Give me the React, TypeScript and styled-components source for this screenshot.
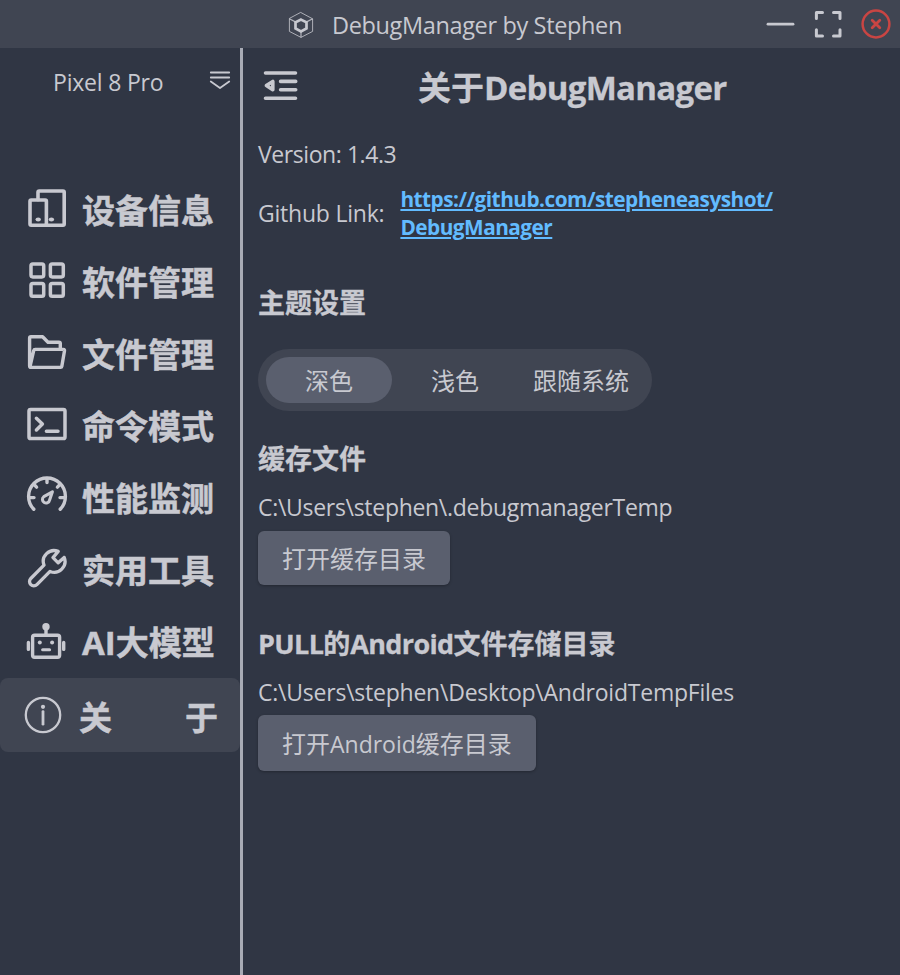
import React from "react";
import styled, { createGlobalStyle } from "styled-components";

const color = {
  bg: "#303644",
  raised: "#404552",
  control: "#5a5f6e",
  text: "#c8c9d0",
  divider: "#a8abb5",
  link: "#62bbff",
  danger: "#c94543",
};

const GlobalStyle = createGlobalStyle`
  *, *::before, *::after { box-sizing: border-box; }
  body {
    margin: 0;
    background: ${color.bg};
    color: ${color.text};
    font-family: "Open Sans", "Noto Sans CJK SC", sans-serif;
  }
`;

const Window = styled.div`
  display: flex;
  flex-direction: column;
  width: 900px;
  height: 975px;
  overflow: hidden;
  background: ${color.bg};
`;

const TitleBar = styled.header`
  display: flex;
  align-items: center;
  flex: none;
  height: 48px;
  padding: 0 8px 0 287px;
  background: ${color.raised};
`;

const AppTitle = styled.span`
  margin-left: 17px;
  font-size: 23.5px;
  line-height: 32px;
  letter-spacing: -0.36px;
  white-space: nowrap;
  padding-top: 2px;
`;

const WindowControls = styled.div`
  display: flex;
  gap: 16px;
  margin-left: auto;
`;

const Control = styled.button<{ $danger?: boolean }>`
  display: block;
  width: 32px;
  height: 32px;
  padding: 0;
  border: 0;
  background: none;
  color: ${(p) => (p.$danger ? color.danger : color.text)};
`;

const Icon = styled.svg`
  display: block;
  flex: none;
  fill: none;
  stroke: currentColor;
  stroke-linecap: round;
  stroke-linejoin: round;

  .solid {
    fill: currentColor;
    stroke: none;
  }
`;

const Body = styled.div`
  display: flex;
  flex: 1;
`;

const Sidebar = styled.aside`
  flex: none;
  width: 243px;
  border-right: 3px solid ${color.divider};
`;

const DevicePicker = styled.div`
  display: flex;
  align-items: center;
  height: 66px;
  margin-bottom: 59px;
  padding: 0 8px 0 53px;
`;

const DeviceName = styled.span`
  flex: 1;
  padding-top: 1px;
  font-size: 23px;
  line-height: 32px;
  letter-spacing: -0.2px;
`;

const Nav = styled.nav`
  display: flex;
  flex-direction: column;
`;

const NavItem = styled.a<{ $active?: boolean }>`
  display: flex;
  align-items: center;
  height: ${(p) => (p.$active ? 74 : 72)}px;
  margin-top: ${(p) => (p.$active ? 1 : 0)}px;
  padding-left: ${(p) => (p.$active ? 21 : 25)}px;
  border-radius: 8px;
  background: ${(p) => (p.$active ? color.raised : "transparent")};
`;

const NavLabel = styled.span<{ $spread?: boolean }>`
  display: flex;
  justify-content: space-between;
  width: ${(p) => (p.$spread ? 139 : 134)}px;
  margin-left: ${(p) => (p.$spread ? 14 : 13)}px;
  padding-top: ${(p) => (p.$spread ? 5 : 3)}px;
  font-size: 33px;
  font-weight: 700;
  line-height: 48px;
  white-space: nowrap;
  -webkit-text-stroke: 0.5px currentColor;
`;

const Content = styled.main`
  display: flex;
  flex-direction: column;
  align-items: flex-start;
  flex: 1;
  padding-left: 15px;
`;

const PageHeader = styled.div`
  display: flex;
  align-items: center;
  height: 76px;
  padding-left: 2px;
`;

const PageTitle = styled.h1`
  margin: 0 0 0 118px;
  padding-top: 3px;
  font-size: 33px;
  font-weight: 700;
  line-height: 48px;
  -webkit-text-stroke: 0.3px currentColor;
`;

const Latin = styled.span<{ $track: number; $size?: number }>`
  letter-spacing: ${(p) => p.$track}px;
  ${(p) => p.$size && `font-size: ${p.$size}px;`}
`;

const Text = styled.span<{ $track?: number }>`
  font-size: 23px;
  line-height: 32px;
  letter-spacing: ${(p) => p.$track ?? 0}px;
  white-space: nowrap;
`;

const VersionRow = styled.div`
  display: flex;
  align-items: center;
  height: 60px;
`;

const LinkRow = styled.div`
  display: flex;
  align-items: center;
  height: 58px;
`;

const RepoLink = styled.a`
  margin-left: 16px;
  color: ${color.link};
  font-size: 20.8px;
  font-weight: 700;
  line-height: 28px;
  letter-spacing: -0.52px;
  text-decoration: underline;
  text-decoration-thickness: 2px;
  text-underline-offset: 2px;
`;

const SectionTitle = styled.h2<{ $top: number }>`
  margin: ${(p) => p.$top}px 0 0;
  font-size: 27px;
  font-weight: 700;
  line-height: 40px;
  white-space: nowrap;
  -webkit-text-stroke: 0.3px currentColor;
`;

const Segmented = styled.div`
  display: grid;
  grid-template-columns: repeat(3, 126px);
  height: 62px;
  margin-top: 26px;
  padding: 8px;
  border-radius: 31px;
  background: ${color.raised};
`;

const Segment = styled.button<{ $active?: boolean }>`
  padding: 1px 0 0;
  border: 0;
  border-radius: 23px;
  background: ${(p) => (p.$active ? color.control : "transparent")};
  color: inherit;
  font: inherit;
  font-size: 24px;
  line-height: 45px;
`;

const PathText = styled(Text)`
  margin-top: 12px;
`;

const OpenButton = styled.button<{ $height: number; $top: number }>`
  height: ${(p) => p.$height}px;
  margin-top: ${(p) => p.$top}px;
  padding: 2px 24px 0;
  border: 0;
  border-radius: 6px;
  background: ${color.control};
  box-shadow: 0 1px 3px rgba(0, 0, 0, 0.28);
  color: inherit;
  font: inherit;
  font-size: 24px;
  line-height: 32px;
  white-space: nowrap;
`;

const LogoIcon = () => (
  <Icon width="28" height="28" viewBox="0 0 28 28">
    <path d="M14 2.6 25.6 8.8V21.4L14 27.4 2.4 21.4V8.8Z" strokeWidth="1" opacity=".8" />
    <path d="M14 9.6 19.5 12.4V18.4L14 21.4 8.5 18.4V12.4Z" strokeWidth="2.7" strokeLinejoin="miter" />
    <path d="M14 22V27M7.9 11.6 2.8 9M20.1 11.6 25.2 9" strokeWidth="1.2" opacity=".85" />
  </Icon>
);

const MinimizeIcon = () => (
  <Icon width="32" height="32" viewBox="0 0 32 32" strokeWidth="2.8">
    <path d="M4 16.2H29" />
  </Icon>
);

const FullscreenIcon = () => (
  <Icon width="32" height="32" viewBox="0 0 32 32" strokeWidth="3">
    <path d="M4.4 10.5V4.4H10.5M21.5 4.4H28V10.5M28 21.8V28H21.5M10.5 28H4.4V21.8" />
  </Icon>
);

const CloseIcon = () => (
  <Icon width="32" height="32" viewBox="0 0 32 32">
    <circle cx="16" cy="16" r="13.4" strokeWidth="2.5" />
    <path d="M12.2 12.2 19.8 19.8M19.8 12.2 12.2 19.8" strokeWidth="2.8" />
  </Icon>
);

const PickerIcon = () => (
  <Icon width="24" height="24" viewBox="0 0 24 24" strokeWidth="1.8">
    <path d="M2.8 3.5H21.2M2.8 8.5H21.2M2.8 12.5 12 19 21.2 12.5" />
  </Icon>
);

const CollapseIcon = () => (
  <Icon width="40" height="40" viewBox="0 0 40 40" strokeWidth="3.6">
    <path d="M5.5 7H35.5M5.5 32.3H35.5M20.6 15.4H35.7M20.6 23.8H35.7" />
    <path d="M6.4 19.6 12.8 15.4V23.8Z" strokeWidth="3.6" />
  </Icon>
);

const DevicesIcon = () => (
  <Icon width="44" height="44" viewBox="0 0 44 44" strokeWidth="3.6">
    <path d="M13 12.6V5.2Q13 4 14.2 4H38Q39.2 4 39.2 5.2V37Q39.2 38.2 38 38.2H20.5" />
    <rect x="5" y="13" width="16.4" height="25.2" rx="1.2" />
    <ellipse className="solid" cx="13.2" cy="32.4" rx="2.7" ry="2" />
    <ellipse className="solid" cx="26.4" cy="32.4" rx="2.7" ry="2" />
  </Icon>
);

const AppsIcon = () => (
  <Icon width="44" height="44" viewBox="0 0 44 44" strokeWidth="3.5">
    <rect x="6" y="5" width="12.7" height="12.9" rx="1.8" />
    <rect x="25.4" y="5" width="12.9" height="12.9" rx="1.8" />
    <rect x="6" y="24.4" width="12.7" height="12.9" rx="1.8" />
    <rect x="25.4" y="24.4" width="12.9" height="12.9" rx="1.8" />
  </Icon>
);

const FolderIcon = () => (
  <Icon width="44" height="44" viewBox="0 0 44 44" strokeWidth="3.4">
    <path d="M35.3 18V12.6Q35.3 11.2 33.9 11.2H23L17.6 5.7H6Q4.6 5.7 4.6 7.1V35Q4.6 36.4 6 36.4H35.6Q36.6 36.4 36.8 35.4L39.5 19.8Q39.7 18.4 38.4 18.4H10.2Q9 18.4 8.7 19.6L5 35.6" />
  </Icon>
);

const TerminalIcon = () => (
  <Icon width="44" height="44" viewBox="0 0 44 44" strokeWidth="3.5">
    <rect x="4" y="6.5" width="36" height="29" rx="1.6" />
    <path d="M11.4 15.3 17.4 21 11.4 27M21.4 28.2H33" />
  </Icon>
);

const GaugeIcon = () => (
  <Icon width="44" height="44" viewBox="0 0 44 44" strokeWidth="3.4">
    <path d="M8.8 34.2A18.4 18.4 0 1 1 35.2 34.2" />
    <path d="M22 3.5V7.6M9 9.5 11.6 12.1M35 9.5 32.4 12.1M4.5 22.6H9M39.5 22.6H35" />
    <path d="M27.4 16.8 18.8 21.6A3.6 3.6 0 1 0 24.6 25Z" strokeWidth="3.1" />
  </Icon>
);

const WrenchIcon = () => (
  <Icon width="44" height="44" viewBox="0 0 44 44" strokeWidth="3.3">
    <path d="M33.2 4.4A10.8 10.8 0 0 0 19 18.2L5.8 31.5A4.3 4.3 0 0 0 11.9 37.6L25 24.4A10.8 10.8 0 0 0 39.2 10.4L33.2 15.8 28 10.6Z" />
  </Icon>
);

const RobotIcon = () => (
  <Icon width="44" height="44" viewBox="0 0 44 44" strokeWidth="3.4">
    <g transform="translate(0 0.8)">
      <rect x="7.6" y="15.5" width="27" height="21.9" rx="2" />
      <path d="M21 8V14M3.4 22.6V29.6M38.7 22.6V29.6" />
      <path d="M17.6 29.9H24.6" strokeWidth="3" />
      <circle className="solid" cx="21" cy="6.9" r="3.7" />
      <circle className="solid" cx="14.8" cy="22.8" r="2" />
      <circle className="solid" cx="27.1" cy="22.8" r="2" />
    </g>
  </Icon>
);

const InfoIcon = () => (
  <Icon width="44" height="44" viewBox="0 0 44 44">
    <circle cx="22" cy="22" r="17.2" strokeWidth="2.3" />
    <path d="M22 18.6V31.2" strokeWidth="2.8" />
    <circle className="solid" cx="22" cy="13.8" r="2.1" />
  </Icon>
);

const navItems = [
  { label: "设备信息", icon: <DevicesIcon /> },
  { label: "软件管理", icon: <AppsIcon /> },
  { label: "文件管理", icon: <FolderIcon /> },
  { label: "命令模式", icon: <TerminalIcon /> },
  { label: "性能监测", icon: <GaugeIcon /> },
  { label: "实用工具", icon: <WrenchIcon /> },
  { label: "AI大模型", icon: <RobotIcon /> },
];

export default function App() {
  return (
    <>
      <GlobalStyle />
      <Window>
        <TitleBar>
          <LogoIcon />
          <AppTitle>DebugManager by Stephen</AppTitle>
          <WindowControls>
            <Control aria-label="Minimize"><MinimizeIcon /></Control>
            <Control aria-label="Fullscreen"><FullscreenIcon /></Control>
            <Control aria-label="Close" $danger><CloseIcon /></Control>
          </WindowControls>
        </TitleBar>
        <Body>
          <Sidebar>
            <DevicePicker>
              <DeviceName>Pixel 8 Pro</DeviceName>
              <PickerIcon />
            </DevicePicker>
            <Nav>
              {navItems.map((item) => (
                <NavItem key={item.label}>
                  {item.icon}
                  <NavLabel>{item.label}</NavLabel>
                </NavItem>
              ))}
              <NavItem $active>
                <InfoIcon />
                <NavLabel $spread>
                  <span>关</span>
                  <span>于</span>
                </NavLabel>
              </NavItem>
            </Nav>
          </Sidebar>
          <Content>
            <PageHeader>
              <CollapseIcon />
              <PageTitle>
                关于<Latin $track={-0.7}>DebugManager</Latin>
              </PageTitle>
            </PageHeader>
            <VersionRow>
              <Text $track={-0.43}>Version: 1.4.3</Text>
            </VersionRow>
            <LinkRow>
              <Text $track={-0.22}>Github Link:</Text>
              <RepoLink>
                https://github.com/stepheneasyshot/
                <br />
                DebugManager
              </RepoLink>
            </LinkRow>
            <SectionTitle $top={41}>主题设置</SectionTitle>
            <Segmented>
              <Segment $active>深色</Segment>
              <Segment>浅色</Segment>
              <Segment>跟随系统</Segment>
            </Segmented>
            <SectionTitle $top={28}>缓存文件</SectionTitle>
            <PathText $track={-0.3}>C:\Users\stephen\.debugmanagerTemp</PathText>
            <OpenButton $height={54} $top={8}>打开缓存目录</OpenButton>
            <SectionTitle $top={39}>
              <Latin $track={-0.65}>PULL</Latin>的<Latin $track={-0.65}>Android</Latin>文件存储目录
            </SectionTitle>
            <PathText $track={-0.23}>C:\Users\stephen\Desktop\AndroidTempFiles</PathText>
            <OpenButton $height={56} $top={7}>
              打开<Latin $track={0} $size={23}>Android</Latin>缓存目录
            </OpenButton>
          </Content>
        </Body>
      </Window>
    </>
  );
}
